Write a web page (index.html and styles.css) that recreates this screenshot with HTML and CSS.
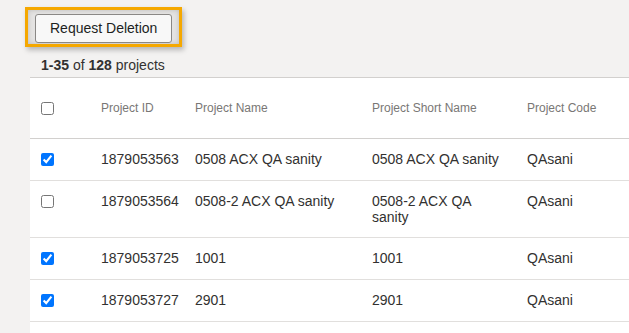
FILE: index.html
```html
<!DOCTYPE html>
<html lang="en">
<head>
    <meta charset="UTF-8">
    <meta name="viewport" content="width=device-width, initial-scale=1.0">
    <title>Projects</title>
    <link rel="stylesheet" href="styles.css">
</head>
<body>

    <div class="toolbar">
        <div class="highlight">
            <button class="btn" type="button">Request Deletion</button>
        </div>
    </div>

    <div class="count"><b>1-35</b> of <b>128</b> projects</div>

    <div class="list">
        <table class="projects">
            <colgroup>
                <col class="col-check">
                <col class="col-id">
                <col class="col-name">
                <col class="col-short">
                <col class="col-code">
            </colgroup>
            <thead>
                <tr>
                    <th class="check"><input type="checkbox"></th>
                    <th>Project ID</th>
                    <th>Project Name</th>
                    <th>Project Short Name</th>
                    <th>Project Code</th>
                </tr>
            </thead>
            <tbody>
                <tr>
                    <td class="check"><input type="checkbox" checked></td>
                    <td>1879053563</td>
                    <td>0508 ACX QA sanity</td>
                    <td>0508 ACX QA sanity</td>
                    <td>QAsani</td>
                </tr>
                <tr>
                    <td class="check"><input type="checkbox"></td>
                    <td>1879053564</td>
                    <td>0508-2 ACX QA sanity</td>
                    <td>0508-2 ACX QA sanity</td>
                    <td>QAsani</td>
                </tr>
                <tr>
                    <td class="check"><input type="checkbox" checked></td>
                    <td>1879053725</td>
                    <td>1001</td>
                    <td>1001</td>
                    <td>QAsani</td>
                </tr>
                <tr>
                    <td class="check"><input type="checkbox" checked></td>
                    <td>1879053727</td>
                    <td>2901</td>
                    <td>2901</td>
                    <td>QAsani</td>
                </tr>
            </tbody>
        </table>
    </div>

</body>
</html>
```

FILE: styles.css
```css
html, body {
    height: 100%;
}
body {
    font-family: 'Liberation Sans', Arial, sans-serif;
    background-color: #f3f2f1;
    color: #323130;
    margin: 0;
    display: flex;
    flex-direction: column;
    overflow: hidden;
}
.toolbar {
    display: flex;
    padding: 7px 0 0 25px;
}
.highlight {
    border: 3px solid #f5a800;
    padding: 4px 7px 1px 7px;
    background-color: #e4e3e2;
    box-shadow: 2px 3px 5px rgba(0, 0, 0, 0.25), inset 0 0 5px rgba(0, 0, 0, 0.18);
}
.btn {
    display: block;
    font-family: inherit;
    font-size: 14px;
    line-height: 17px;
    color: #201f1e;
    background-color: #f8f8f8;
    border: 1px solid #8a8886;
    border-radius: 3px;
    padding: 5px 14px;
    margin: 0;
    cursor: pointer;
}
.count {
    font-size: 14px;
    line-height: 16px;
    margin-top: 10px;
    padding-left: 41px;
}
.count b {
    font-weight: bold;
}
.list {
    flex: 1;
    margin: 4px 0 0 30px;
    background-color: white;
    border-top: 1px solid #d2d0ce;
}
.projects {
    width: 599px;
    table-layout: fixed;
    border-collapse: collapse;
}
.col-check { width: 63px; }
.col-id { width: 94px; }
.col-name { width: 177px; }
.col-short { width: 155px; }
.col-code { width: 110px; }
th {
    height: 60px;
    padding: 0 8px;
    font-size: 12px;
    font-weight: normal;
    line-height: 16px;
    color: #797775;
    text-align: left;
    vertical-align: middle;
    border-bottom: 1px solid #d2d0ce;
}
td {
    padding: 12px 8px;
    font-size: 14px;
    line-height: 16px;
    vertical-align: top;
    border-bottom: 1px solid #e1dfdd;
}
th.check, td.check {
    padding-left: 11px;
    padding-right: 0;
}
.check input {
    display: block;
    width: 13px;
    height: 13px;
    margin: 2px 0;
}
th.check input {
    margin: 0;
}
```
